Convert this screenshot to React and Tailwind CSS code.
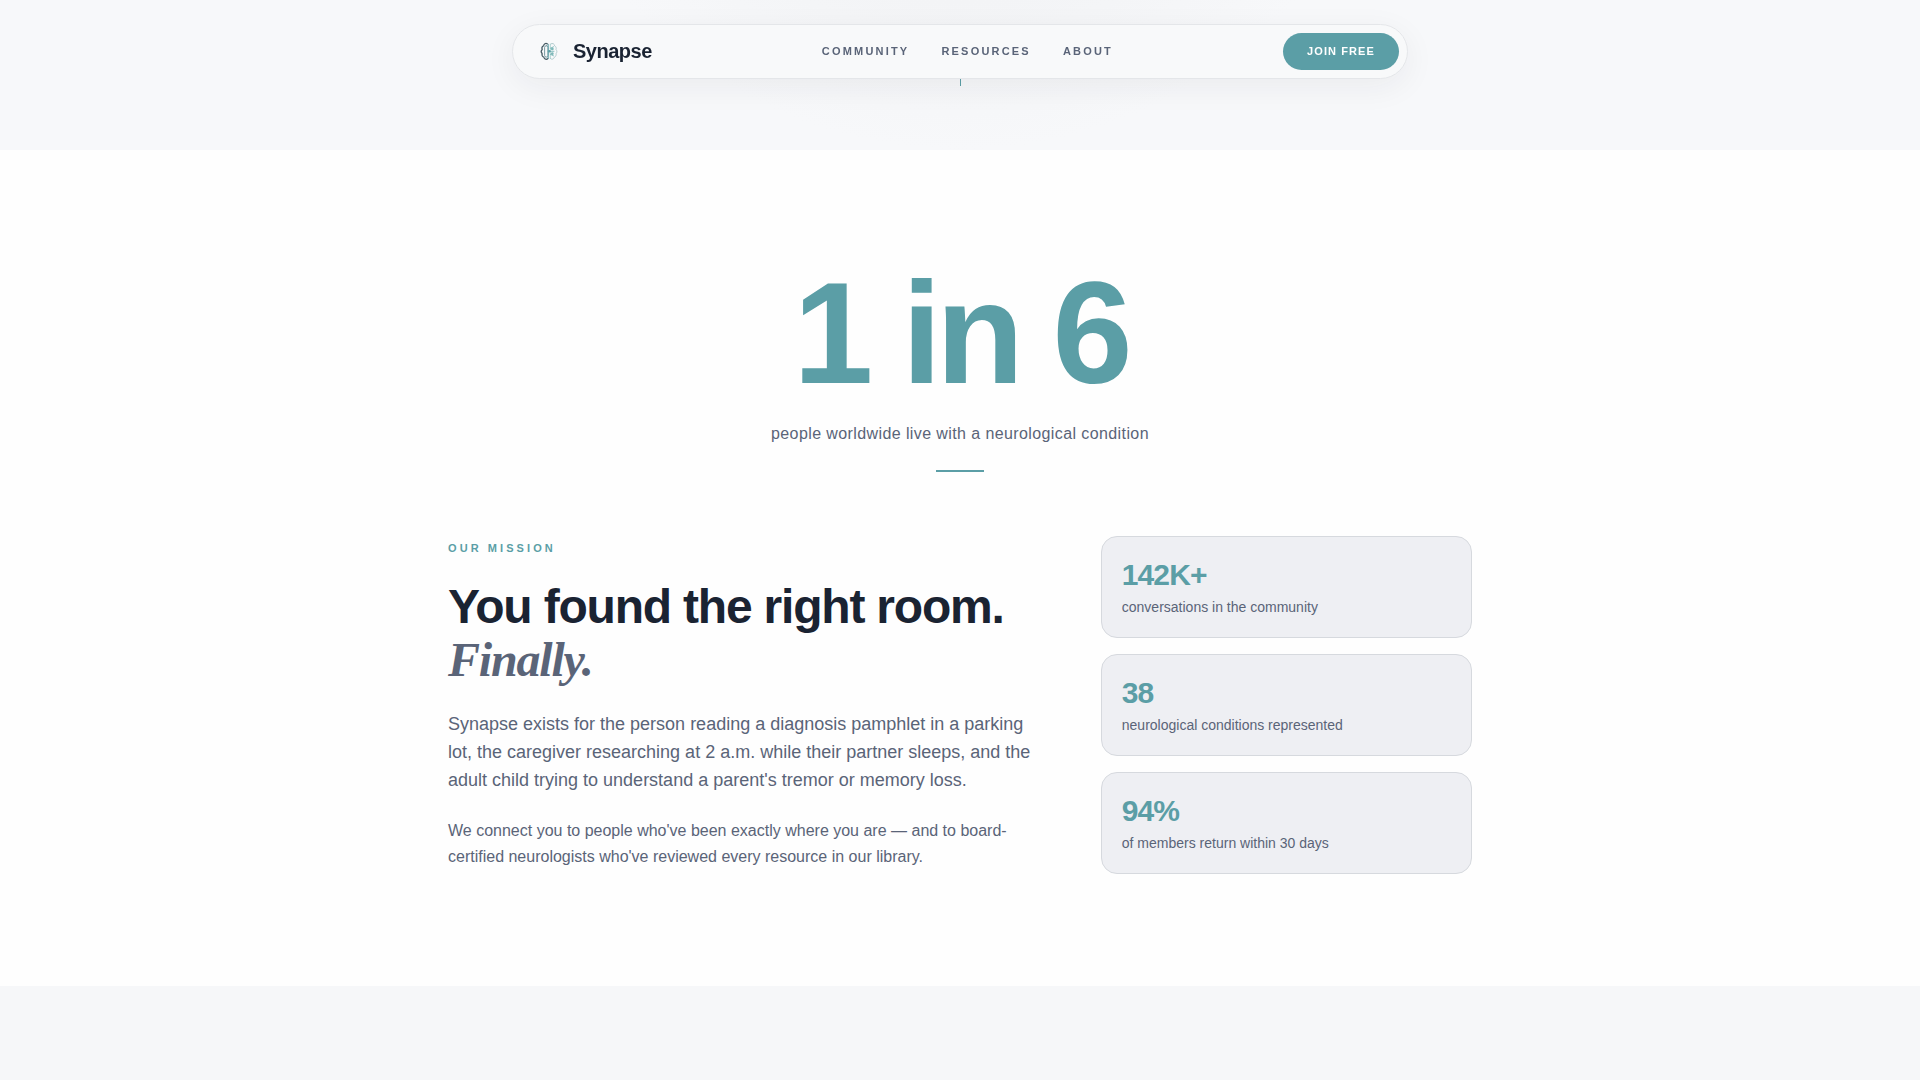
import React from 'react';

const navItems = [
  { name: 'Community', href: '#community' },
  { name: 'Resources', href: '#resources' },
  { name: 'About', href: '#about' },
];

const stats = [
  { value: '142K+', label: 'conversations in the community' },
  { value: '38', label: 'neurological conditions represented' },
  { value: '94%', label: 'of members return within 30 days' },
];

const BrainLogo = () => (
  <svg className="w-8 h-8" viewBox="0 0.7 32 32" fill="none" strokeLinecap="round" aria-hidden="true">
    {/* Left lobe */}
    <path
      d="M14.5 8.6C12.6 7.4 10.8 8.6 10.6 10.5C9 11.2 8.7 13 9.2 14.2C8 15.4 8.1 17.2 9.1 18.2C8.7 20 9.6 21.5 10.9 22C11.4 24 13.6 24.6 14.9 23.2"
      stroke="#465a63"
      strokeWidth="1.2"
    />
    <rect x="11.6" y="10.4" width="3.4" height="11.4" rx="1.7" stroke="#6b8f96" strokeWidth="0.9" />
    <path d="M15.2 9V23" stroke="#5b9ea6" strokeWidth="1" />
    {/* Right lobe */}
    <path
      d="M17.7 8.6C19.8 7.4 21.4 8.6 21.6 10.5C23.2 11.2 23.5 13 23 14.2C24.2 15.4 24.1 17.2 23.1 18.2C23.5 20 22.6 21.5 21.3 22C20.8 24 18.6 24.6 17.3 23.2"
      stroke="#a9c6c8"
      strokeWidth="0.9"
    />
    <path d="M17.3 9V23" stroke="#9cc8c7" strokeWidth="0.8" />
    <path d="M17.3 13L20.5 11.5M17.3 16H21M17.3 19L20.5 20.5M14.8 16H17.3" stroke="#7db8b8" strokeWidth="0.9" />
    <circle cx="19.3" cy="13.6" r="1.4" fill="#7db8b8" />
    <circle cx="19.3" cy="18.4" r="1.4" fill="#7db8b8" />
    <circle cx="16.3" cy="16" r="1.2" fill="#5b9ea6" />
  </svg>
);

const Navbar = () => (
  <header className="fixed inset-x-0 top-6 z-30 px-4">
    <nav className="max-w-4xl mx-auto flex items-center justify-between rounded-full border border-[#e4e6e9] bg-[#f8f9fa] py-2 pl-5 pr-2 shadow-[0_8px_32px_rgba(26,35,50,0.06)]">
      <a href="#home" className="flex items-center gap-2">
        <BrainLogo />
        <span className="text-xl leading-[25px] font-bold tracking-tight text-[#1a2332]">Synapse</span>
      </a>

      <div className="flex items-center gap-8">
        {navItems.map((item) => (
          <a
            key={item.name}
            href={item.href}
            className="text-[11px] font-semibold uppercase tracking-[0.2em] text-[#5a6478] hover:text-[#1a2332] transition-colors"
          >
            {item.name}
          </a>
        ))}
      </div>

      <button className="rounded-full bg-[#5b9ea6] px-6 py-[10px] text-[11px] leading-[17px] font-bold uppercase tracking-[0.1em] text-white">
        Join Free
      </button>
    </nav>
  </header>
);

const StatCard = ({ value, label }) => (
  <div className="rounded-2xl border border-[#d6d9de] bg-[#eeeff3] p-5">
    <div className="text-3xl leading-9 font-bold tracking-[-0.03em] text-[#5b9ea6]">{value}</div>
    <div className="mt-1 text-sm text-[#5a6478]">{label}</div>
  </div>
);

const Mission = () => (
  <section className="bg-[#fefefe] px-6 py-28">
    <div className="max-w-5xl mx-auto">
      <div className="flex flex-col items-center text-center mb-16">
        <div className="text-[144px] leading-none font-bold tracking-[-0.04em] text-[#5b9ea6]">1 in 6</div>
        <p className="mt-4 text-base tracking-wide text-[#5a6478]">
          people worldwide live with a neurological condition
        </p>
        <div className="mt-6 h-[2px] w-12 bg-[#5b9ea6]" />
      </div>

      <div className="grid grid-cols-5 gap-16 items-center">
        <div className="col-span-3">
          <p className="mb-6 text-[11px] leading-4 font-bold uppercase tracking-[0.28em] text-[#5b9ea6]">
            Our Mission
          </p>
          <h2 className="mb-6 text-5xl leading-[53px] font-bold tracking-tight text-[#1a2332]">
            You found the right room.
            <br />
            <span className="font-['Liberation_Serif',serif] italic text-[#5a6478]">Finally.</span>
          </h2>
          <p className="mb-6 text-lg leading-7 text-[#5a6478]">
            Synapse exists for the person reading a diagnosis pamphlet in a parking lot, the caregiver
            researching at 2 a.m. while their partner sleeps, and the adult child trying to understand a
            parent's tremor or memory loss.
          </p>
          <p className="text-base leading-[26px] text-[#5a6478]">
            We connect you to people who've been exactly where you are — and to board-certified
            neurologists who've reviewed every resource in our library.
          </p>
        </div>

        <div className="col-span-2 flex flex-col gap-4">
          {stats.map((stat) => (
            <StatCard key={stat.label} {...stat} />
          ))}
        </div>
      </div>
    </div>
  </section>
);

export default function App() {
  return (
    <div className="min-h-screen flex flex-col bg-[#f6f7f9] font-['Liberation_Sans',Arial,sans-serif]">
      <Navbar />

      {/* Tail of the hero, with the scroll cue */}
      <div className="h-[150px] flex justify-center items-end pb-16 bg-[radial-gradient(circle_at_50%_-300px,#f3f4f6_300px,#f7f8fa_450px)]">
        <div className="h-12 w-px bg-[#5b9ea6]" />
      </div>

      <Mission />

      <div className="flex-1" />
    </div>
  );
}
